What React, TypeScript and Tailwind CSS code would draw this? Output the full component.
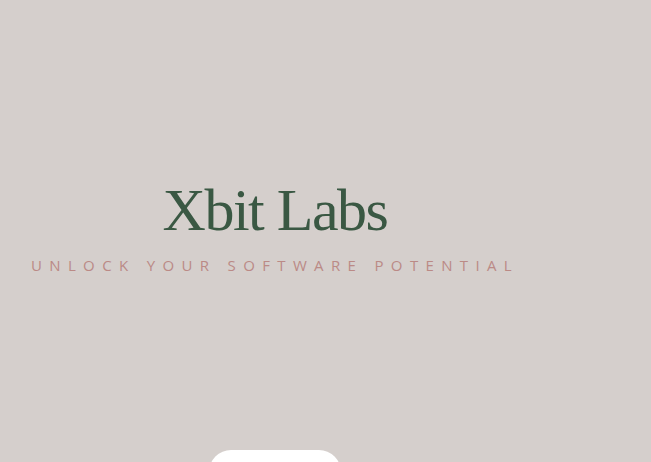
export default function App() {
  return (
    <main className="flex min-h-screen w-full overflow-hidden bg-[#d5cfcc]">
      <section className="flex w-[550px] flex-col items-center pt-[180px]">
        <h1 className="font-['Liberation_Serif',serif] text-[60px] font-normal leading-none tracking-[-0.025em] text-[#3a5843]">
          Xbit Labs
        </h1>
        <p className="mt-[18px] font-['Open_Sans',sans-serif] text-[15px] leading-none tracking-[0.49em] text-[#bb8a86]">
          UNLOCK YOUR SOFTWARE POTENTIAL
        </p>
        <button
          aria-label="Get started"
          className="mt-[177px] h-[44px] w-[132px] shrink-0 rounded-full bg-white"
        />
      </section>
    </main>
  );
}
